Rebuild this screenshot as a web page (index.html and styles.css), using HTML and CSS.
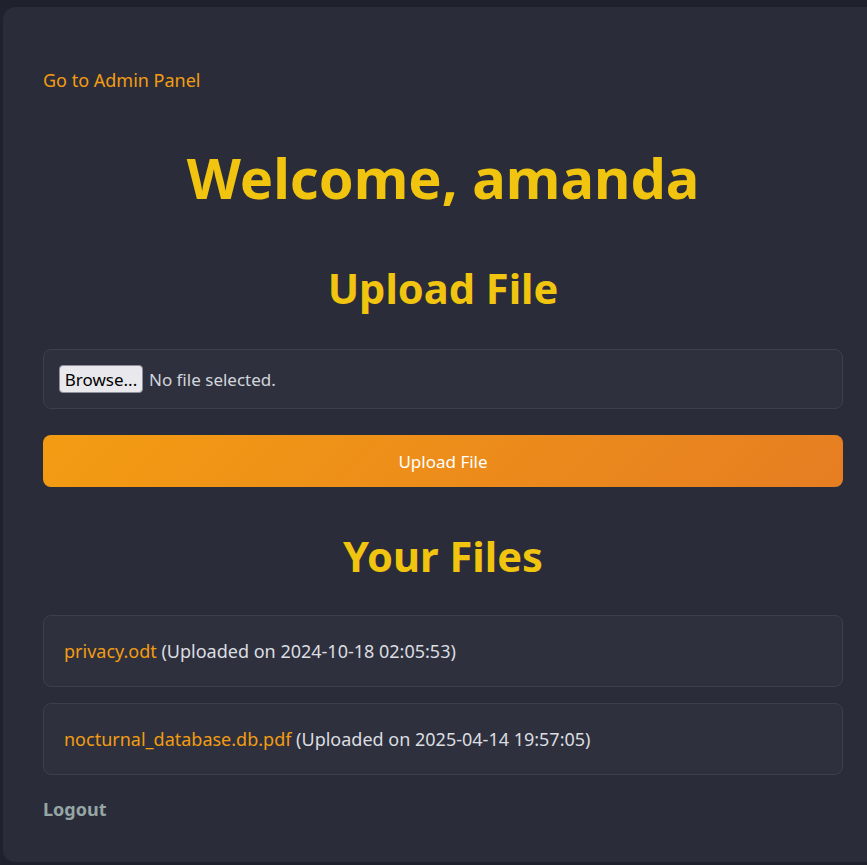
FILE: index.html
```html
<!DOCTYPE html>
<html lang="en">
<head>
<meta charset="utf-8">
<title>Dashboard</title>
<link rel="stylesheet" href="styles.css">
</head>
<body>
<div class="card">
  <div class="top-nav"><a href="#" class="admin-link">Go to Admin Panel</a></div>
  <h1 class="title">Welcome, amanda</h1>
  <h2 class="section-title">Upload File</h2>
  <form class="upload-form">
    <label class="file-box">
      <input type="file" class="file-input">
      <span class="browse-btn">Browse...</span>
      <span class="file-status">No file selected.</span>
    </label>
    <button type="button" class="upload-btn">Upload File</button>
  </form>
  <h2 class="section-title files-title">Your Files</h2>
  <ul class="file-list">
    <li class="file-item"><a href="#" class="file-link">privacy.odt</a> (Uploaded on 2024-10-18 02:05:53)</li>
    <li class="file-item"><a href="#" class="file-link">nocturnal_database.db.pdf</a> (Uploaded on 2025-04-14 19:57:05)</li>
  </ul>
  <a href="#" class="logout">Logout</a>
</div>
</body>
</html>
```

FILE: styles.css
```css
html, body {
  margin: 0;
  padding: 0;
}
body {
  background: #1f222d;
  font-family: "Noto Sans", "Open Sans", sans-serif;
  color: #dcdde1;
  overflow: hidden;
  height: 865px;
}
.card {
  margin: 7px 0 0 3px;
  width: 800px;
  padding: 40px;
  background: #2a2d39;
  border-radius: 12px;
  height: 775px;
}
.top-nav {
  padding-top: 21px;
  line-height: 24px;
}
.admin-link {
  color: #f39c12;
  text-decoration: none;
  font-size: 18px;
}
.title {
  margin: 51px 0 0;
  text-align: center;
  color: #f1c40f;
  font-size: 56px;
  line-height: 1.2;
  font-weight: 700;
}
.section-title {
  margin: 53px 0 0;
  text-align: center;
  color: #f1c40f;
  font-size: 41.6px;
  line-height: 48px;
  font-weight: 700;
}
.upload-form {
  margin-top: 37px;
  display: flex;
  flex-direction: column;
  gap: 26px;
}
.file-box {
  display: flex;
  align-items: center;
  gap: 6px;
  padding: 15px;
  height: 28px;
  background: #2e313d;
  border: 1px solid #3d404b;
  border-radius: 8px;
  position: relative;
}
.file-input {
  position: absolute;
  width: 1px;
  height: 1px;
  opacity: 0;
  overflow: hidden;
}
.browse-btn {
  box-sizing: border-box;
  height: 28px;
  width: 84px;
  display: flex;
  align-items: center;
  justify-content: center;
  background: #e9e9ed;
  border: 1px solid #8f8f9d;
  border-radius: 4px;
  color: #000;
  font-size: 17px;
}
.file-status {
  font-size: 17px;
  color: #d2d5dc;
}
.upload-btn {
  height: 52px;
  border: 0;
  border-radius: 8px;
  background: linear-gradient(135deg, #f39c12, #e67e22);
  color: #fff;
  font-family: inherit;
  font-size: 17px;
}
.files-title {
  margin-top: 45px;
}
.file-list {
  list-style: none;
  margin: 35px 0 0;
  padding: 0;
  display: flex;
  flex-direction: column;
  gap: 16px;
}
.file-item {
  padding: 20px;
  background: #2e313d;
  border: 1px solid #3d404b;
  border-radius: 8px;
  font-size: 18px;
  line-height: 30px;
}
.file-link {
  color: #f39c12;
  text-decoration: none;
}
.logout {
  display: inline-block;
  margin-top: 22px;
  color: #95a5a6;
  font-weight: 700;
  font-size: 18px;
  text-decoration: none;
  line-height: 24px;
}
```
